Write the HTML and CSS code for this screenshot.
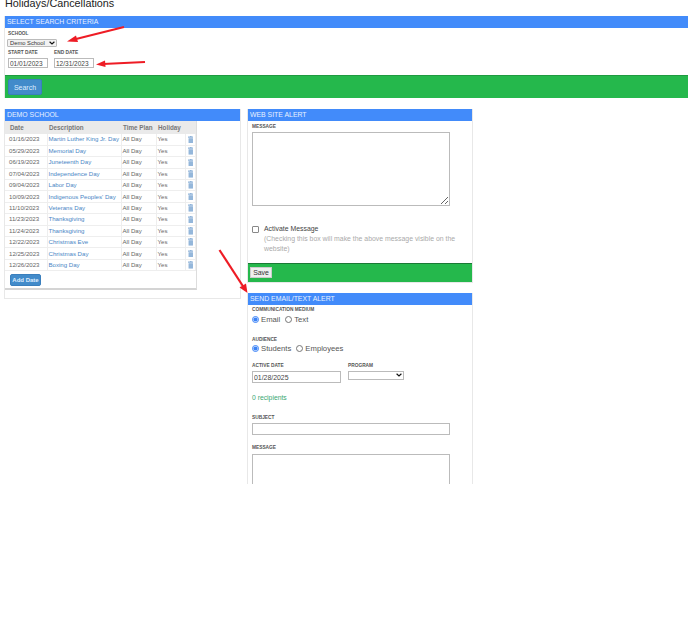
FILE: index.html

```html
<!DOCTYPE html>
<html lang="en">
<head>
  <meta charset="UTF-8">
  <meta name="viewport" content="width=device-width, initial-scale=1.0">
  <title>Holidays/Cancellations</title>
  <link rel="stylesheet" href="styles.css">
</head>
<body>
  <svg class="defs" width="0" height="0">
    <symbol id="trash" viewBox="0 0 10 14">
      <path d="M3.500 0h3v1H10v2H0V1h3.500zM1 4h8v10H1z" fill="currentColor"/>
      <path d="M3.200 5.500v7M5 5.500v7M6.800 5.500v7" stroke="#a8c4e0" stroke-width=".5"/>
    </symbol>
    <symbol id="chevron" viewBox="0 0 10 6">
      <path d="M1 1l4 3.500L9 1" fill="none" stroke="#111" stroke-width="2"/>
    </symbol>
  </svg>
  <div class="page">
    <h1>Holidays/Cancellations</h1>

    <section class="panel criteria">
      <div class="panel-head">SELECT SEARCH CRITERIA</div>
      <div class="criteria-body">
        <label class="small-label">SCHOOL</label>
        <div class="select-wrap school-wrap">
          <select class="school-select"><option>Demo School</option></select>
          <svg class="chevron"><use href="#chevron"/></svg>
        </div>
        <div class="date-row">
          <div class="field">
            <label class="small-label">START DATE</label>
            <input class="date-input" type="text" value="01/01/2023">
          </div>
          <div class="field">
            <label class="small-label">END DATE</label>
            <input class="date-input" type="text" value="12/31/2023">
          </div>
        </div>
      </div>
      <div class="green-bar search-bar"><button class="btn-blue search-btn">Search</button></div>
    </section>

    <div class="columns">
      <section class="panel left-panel">
        <div class="panel-head">DEMO SCHOOL</div>
        <div class="table-card">
          <table class="holidays">
            <thead>
              <tr><th class="col-date">Date</th><th class="col-desc">Description</th><th class="col-plan">Time Plan</th><th class="col-hol">Holiday</th><th class="col-del"></th></tr>
            </thead>
            <tbody>
              <tr><td>01/16/2023</td><td><a href="#">Martin Luther King Jr. Day</a></td><td>All Day</td><td>Yes</td><td class="del"><svg><use href="#trash"/></svg></td></tr>
              <tr><td>05/29/2023</td><td><a href="#">Memorial Day</a></td><td>All Day</td><td>Yes</td><td class="del"><svg><use href="#trash"/></svg></td></tr>
              <tr><td>06/19/2023</td><td><a href="#">Juneteenth Day</a></td><td>All Day</td><td>Yes</td><td class="del"><svg><use href="#trash"/></svg></td></tr>
              <tr><td>07/04/2023</td><td><a href="#">Independence Day</a></td><td>All Day</td><td>Yes</td><td class="del"><svg><use href="#trash"/></svg></td></tr>
              <tr><td>09/04/2023</td><td><a href="#">Labor Day</a></td><td>All Day</td><td>Yes</td><td class="del"><svg><use href="#trash"/></svg></td></tr>
              <tr><td>10/09/2023</td><td><a href="#">Indigenous Peoples' Day</a></td><td>All Day</td><td>Yes</td><td class="del"><svg><use href="#trash"/></svg></td></tr>
              <tr><td>11/10/2023</td><td><a href="#">Veterans Day</a></td><td>All Day</td><td>Yes</td><td class="del"><svg><use href="#trash"/></svg></td></tr>
              <tr><td>11/23/2023</td><td><a href="#">Thanksgiving</a></td><td>All Day</td><td>Yes</td><td class="del"><svg><use href="#trash"/></svg></td></tr>
              <tr><td>11/24/2023</td><td><a href="#">Thanksgiving</a></td><td>All Day</td><td>Yes</td><td class="del"><svg><use href="#trash"/></svg></td></tr>
              <tr><td>12/22/2023</td><td><a href="#">Christmas Eve</a></td><td>All Day</td><td>Yes</td><td class="del"><svg><use href="#trash"/></svg></td></tr>
              <tr><td>12/25/2023</td><td><a href="#">Christmas Day</a></td><td>All Day</td><td>Yes</td><td class="del"><svg><use href="#trash"/></svg></td></tr>
              <tr><td>12/26/2023</td><td><a href="#">Boxing Day</a></td><td>All Day</td><td>Yes</td><td class="del"><svg><use href="#trash"/></svg></td></tr>
            </tbody>
          </table>
          <div class="table-foot"><button class="btn-blue add-btn">Add Date</button></div>
        </div>
      </section>

      <div class="right-col">
        <section class="panel">
          <div class="panel-head">WEB SITE ALERT</div>
          <div class="alert-body">
            <label class="small-label">MESSAGE</label>
            <textarea class="box alert-msg"></textarea>
            <div class="activate">
              <input class="check" type="checkbox">
              <div class="activate-text">
                <span class="activate-title">Activate Message</span>
                <p class="hint">(Checking this box will make the above message visible on the website)</p>
              </div>
            </div>
          </div>
          <div class="green-bar save-bar"><button class="save-btn">Save</button></div>
        </section>

        <section class="panel send-panel">
          <div class="panel-head">SEND EMAIL/TEXT ALERT</div>
          <div class="send-body">
            <label class="small-label">COMMUNICATION MEDIUM</label>
            <div class="radios">
              <input type="radio" name="medium" checked><span>Email</span>
              <input type="radio" name="medium"><span>Text</span>
            </div>
            <label class="small-label gap-label">AUDIENCE</label>
            <div class="radios">
              <input type="radio" name="aud" checked><span>Students</span>
              <input type="radio" name="aud"><span>Employees</span>
            </div>
            <div class="active-row">
              <div class="field">
                <label class="small-label">ACTIVE DATE</label>
                <input class="box active-date" type="text" value="01/28/2025">
              </div>
              <div class="field">
                <label class="small-label">PROGRAM</label>
                <div class="select-wrap program-wrap">
                  <select class="program"><option></option></select>
                  <svg class="chevron"><use href="#chevron"/></svg>
                </div>
              </div>
            </div>
            <div class="recipients">0 recipients</div>
            <label class="small-label">SUBJECT</label>
            <input class="box subject" type="text">
            <label class="small-label msg-label">MESSAGE</label>
            <textarea class="box send-msg"></textarea>
          </div>
        </section>
      </div>
    </div>

    <!-- red annotation arrows drawn on top of the screenshot -->
    <svg class="arrows" width="688" height="484" viewBox="0 0 688 484">
      <g fill="none" stroke="#ee1c25" stroke-width="2.200">
        <path d="M124 27 74 39.500"/>
        <path d="M145 62 103 64"/>
        <path d="M219.500 250 243.500 287"/>
      </g>
      <g fill="#ee1c25">
        <path d="M67 41.500 76 35.500 78 42z"/>
        <path d="M96 64.500 105 60.500 105.500 67z"/>
        <path d="M247.500 293 239.500 287.500 246 283.500z"/>
      </g>
    </svg>
  </div>
</body>
</html>
```

FILE: styles.css

```css
* { box-sizing: border-box; }
body { margin: 0; background: white; font-family: 'Liberation Sans', Arial, sans-serif; color: #333; }
.defs { position: absolute; }
.page { position: relative; width: 688px; height: 484px; overflow: hidden; padding: 0 0 0 4px; }
.arrows { position: absolute; left: 0; top: 0; pointer-events: none; }

h1 { margin: -5px 0 0; height: 21px; padding-left: 1px; font-size: 10.800px; line-height: 16px; font-weight: normal; color: #222; }

.panel { border: 1px solid #e8e8e8; border-top: 0; background: white; }
.panel-head {
  background: #428bfa; color: #e8f1ff; height: 12px; line-height: 12px;
  font-size: 6.900px; padding-left: 2px;
}
.small-label { display: block; font-size: 4.800px; line-height: 6px; color: #555; font-weight: 600; }

.select-wrap { position: relative; }
.chevron { position: absolute; right: 2px; top: 2px; width: 6px; height: 4px; }
.school-wrap { width: 50px; height: 8px; margin: 2px 0 3px -1px; }
.school-select {
  display: block; appearance: none; width: 100%; height: 100%; padding: 0 0 0 2px; font: 5.800px/6px 'Liberation Sans', Arial, sans-serif;
  border: 1px solid #bbb; border-radius: 1px; background: #f2f2f2; color: #333;
}
.criteria { width: 700px; height: 82px; }
.criteria-body { height: 47px; padding: 3px 0 0 3px; }
.date-row { display: flex; gap: 6px; }
.date-input {
  display: block; width: 40px; height: 10px; margin-top: 2px; padding: 0 1px; font: 6.500px 'Liberation Sans', Arial, sans-serif;
  border: 1px solid #bbb; color: #444;
}
.green-bar { background: #25b84c; border-top: 1px solid #1f9a40; }
.search-bar { height: 23px; padding: 3px 0 0 3px; }
.btn-blue {
  display: block; background: #428bca; color: #dfeeff; border: 1px solid #3a7fbd; border-radius: 2px; padding: 0;
  font: 7px 'Liberation Sans', Arial, sans-serif;
}
.search-btn { width: 34px; height: 16px; }

.columns { display: flex; align-items: flex-start; gap: 6px; margin-top: 11px; }
.left-panel { width: 237px; height: 190px; }
.table-card { width: 192px; height: 169px; border: 1px solid #ddd; border-top: 0; border-bottom: 2px solid #d4d4d4; border-left: 0; }

.holidays { border-collapse: collapse; table-layout: fixed; width: 191px; font-size: 6.100px; }
.holidays th {
  background: #eaeaea; height: 13px; padding: 0 0 0 2px; text-align: left; font-weight: bold; color: #777; font-size: 6.300px; white-space: nowrap;
}
.holidays td { height: 11.400px; padding: 0 0 0 1px; border: 1px solid #eee; border-left: 0; border-top: 0; color: #666; white-space: nowrap; overflow: hidden; line-height: 10px; }
.holidays th.col-date { width: 42px; padding-left: 5px; }
.holidays th.col-desc { width: 74px; padding-left: 2px; }
.holidays th.col-plan { width: 35px; }
.holidays th.col-hol { width: 29px; }
.holidays td:first-child { padding-left: 4px; }
.holidays a { color: #4a86c5; text-decoration: none; }
.holidays td.del { text-align: center; color: #8fb3d9; padding: 0; }
.del svg { display: block; width: 5.500px; height: 7.700px; margin: 0 auto; }
.table-foot { padding: 3px 0 0 5px; }
.add-btn { width: 31px; height: 12px; font-size: 6px; font-weight: bold; }

.right-col { width: 226px; }
.alert-body { height: 142px; padding: 3px 0 0 4px; }
.box { display: block; border: 1px solid #bbb; background: white; }
.alert-msg { width: 198px; height: 74px; margin-top: 2px; padding: 0; }
.activate { display: flex; gap: 5px; margin-top: 18px; }
.check { appearance: none; width: 7px; height: 7px; margin: 2px 0 0 0; flex: none; border: 1px solid #888; border-radius: 1px; background: white; }
.activate-title { display: block; font-size: 6.900px; line-height: 10px; color: #444; }
.hint { margin: 0; width: 196px; font-size: 6.900px; line-height: 10px; color: #aaa; }
.save-bar { height: 19px; padding: 3px 0 0 2px; border-top-color: #1a7a35; }
.save-btn {
  display: block; width: 22px; height: 11px; padding: 0; border: 1px solid #ccc; background: #efefef;
  font: 6.900px 'Liberation Sans', Arial, sans-serif; color: #333;
}
.send-panel { margin-top: 10px; height: 300px; }
.send-body { padding: 2px 0 0 4px; }
.radios { display: flex; align-items: center; height: 11px; margin-top: .5px; font-size: 7.700px; color: #555; }
.radios input { width: 7px; height: 7px; margin: 0 2px 0 0; accent-color: #3b82f6; }
.radios span { margin-right: 5px; }
.gap-label { margin-top: 12px; }
.active-row { display: flex; gap: 7px; margin-top: 9px; }
.active-date { width: 89px; height: 12px; margin-top: 2px; padding: 0 1px; font: 6.900px 'Liberation Sans', Arial, sans-serif; color: #444; }
.program-wrap { width: 56px; height: 9px; margin-top: 2px; }
.program { display: block; appearance: none; width: 100%; height: 100%; padding: 0; border: 1px solid #bbb; background: white; border-radius: 0; font-size: 6px; }
.recipients { margin-top: 10px; height: 22px; font-size: 6.800px; line-height: 10px; color: #3aa873; }
.subject { width: 198px; height: 12px; margin-top: 2px; }
.msg-label { margin-top: 10px; }
.send-msg { width: 198px; height: 75px; margin-top: 2.500px; padding: 0; }
```
